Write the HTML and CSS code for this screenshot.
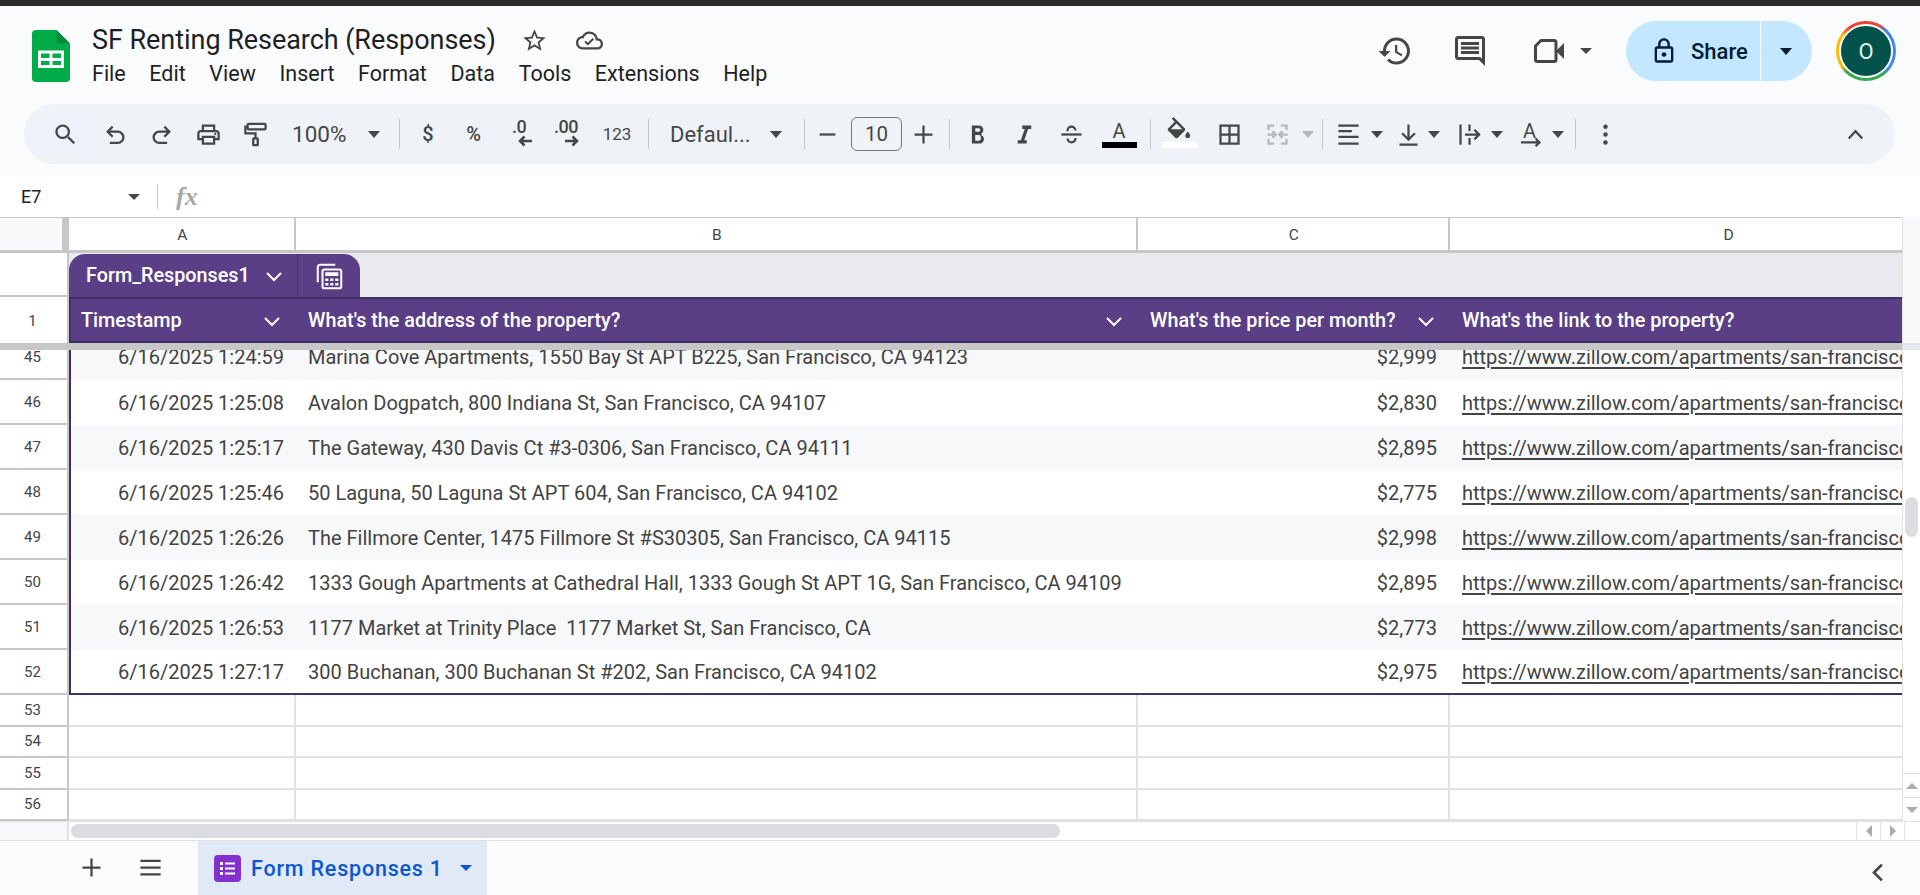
FILE: index.html
```html
<!DOCTYPE html>
<html lang="en">
<head>
<meta charset="utf-8">
<title>SF Renting Research (Responses)</title>
<link rel="stylesheet" href="styles.css">
</head>
<body>
<svg class="sprites" aria-hidden="true">
  <symbol id="i-chev" viewBox="0 0 24 24"><path d="M5 9l7 7 7-7" fill="none" stroke="currentColor" stroke-width="2"/></symbol>
  <symbol id="i-search" viewBox="0 0 24 24"><path d="M15.5 14h-.79l-.28-.27C15.41 12.59 16 11.11 16 9.5 16 5.91 13.09 3 9.5 3S3 5.91 3 9.5 5.91 16 9.5 16c1.61 0 3.09-.59 4.23-1.57l.27.28v.79l5 4.99L20.49 19l-4.99-5zm-6 0C7.01 14 5 11.99 5 9.5S7.01 5 9.5 5 14 7.01 14 9.5 11.99 14 9.5 14z"/></symbol>
  <symbol id="i-undo" viewBox="0 0 24 24"><path d="M9.5 5 5 9.5 9.5 14M5.5 9.5H14a5 5 0 0 1 0 10H7" fill="none" stroke="currentColor" stroke-width="2"/></symbol>
  <symbol id="i-redo" viewBox="0 0 24 24"><path d="M14.5 5 19 9.5 14.5 14M18.500 9.500H10a5 5 0 0 0 0 10h7" fill="none" stroke="currentColor" stroke-width="2"/></symbol>
  <symbol id="i-print" viewBox="0 0 24 24"><path d="M19 8h-1V3H6v5H5c-1.660 0-3 1.340-3 3v6h4v4h12v-4h4v-6c0-1.660-1.340-3-3-3zM8 5h8v3H8V5zm8 12v2H8v-4h8v2zm2-2v-2H6v2H4v-4c0-.55.45-1 1-1h14c.55 0 1 .45 1 1v4h-2z"/><circle cx="18" cy="11.500" r="1"/></symbol>
  <symbol id="i-paint" viewBox="0 0 24 24"><path d="M6 2.500h14a1 1 0 0 1 1 1v3a1 1 0 0 1-1 1H6a1 1 0 0 1-1-1v-3a1 1 0 0 1 1-1zM5 5H3v6h9v4M10.500 15.500h3a.5.5 0 0 1 .5.5v5a.5.5 0 0 1-.5.500h-3a.5.5 0 0 1-.5-.500v-5a.5.5 0 0 1 .5-.500z" fill="none" stroke="currentColor" stroke-width="2"/></symbol>
  <symbol id="i-left" viewBox="0 0 16 12"><path d="M15 6H3M7.500 1.500 3 6l4.500 4.500" fill="none" stroke="currentColor" stroke-width="2.500"/></symbol>
  <symbol id="i-right" viewBox="0 0 16 12"><path d="M1 6h12M8.500 1.500 13 6l-4.500 4.500" fill="none" stroke="currentColor" stroke-width="2.500"/></symbol>
  <symbol id="i-minus" viewBox="0 0 24 24"><path d="M5 11h14v2H5z"/></symbol>
  <symbol id="i-plus" viewBox="0 0 24 24"><path d="M11 4h2v7h7v2h-7v7h-2v-7H4v-2h7z"/></symbol>
  <symbol id="i-bold" viewBox="0 0 24 24"><path d="M15.600 10.790c.97-.67 1.650-1.770 1.650-2.790 0-2.260-1.750-4-4-4H7v16h7.040c2.090 0 3.710-1.700 3.710-4.290 0-1.520-.86-2.320-2.150-2.920zM10 6.500h3c.83 0 1.500.67 1.500 1.500s-.67 1.500-1.500 1.500h-3v-3zm3.500 11H10v-5h3.500c.83 0 1.500 1.170 1.500 2.500s-.67 2.500-1.500 2.500z"/></symbol>
  <symbol id="i-italic" viewBox="0 0 24 24"><path d="M10 4v3h2.210l-3.420 10H6v3h8v-3h-2.210l3.420-10H18V4z"/></symbol>
  <symbol id="i-strike" viewBox="0 0 24 24"><path d="M3 11h18v2H3z"/><path d="M8.500 9V8.500a3.500 3.500 0 0 1 7 0M8.500 15.500a3.500 3.500 0 0 0 7 0V15" fill="none" stroke="currentColor" stroke-width="2"/></symbol>
  <symbol id="i-fill" viewBox="0 0 24 24"><path d="M7.620 0 6.210 1.410l2.380 2.380-5.150 5.150c-.59.59-.59 1.540 0 2.120l5.500 5.500c.29.29.68.44 1.060.44s.77-.15 1.060-.44l5.500-5.500c.59-.58.59-1.530 0-2.120zM5.210 10 10 5.210 14.790 10z"/><path d="M4 10h12l-6 6zM19 11.500s-2 2.170-2 3.500c0 1.100.9 2 2 2s2-.9 2-2c0-1.330-2-3.500-2-3.500z"/></symbol>
  <symbol id="i-borders" viewBox="0 0 24 24"><path d="M3 3v18h18V3zm8 16H5v-6h6zm0-8H5V5h6zm8 8h-6v-6h6zm0-8h-6V5h6z"/></symbol>
  <symbol id="i-merge" viewBox="0 0 24 24"><path d="M4 8V4h5M15 4h5v4M4 16v4h5M15 20h5v-4M3 12h7M7.500 9 10.500 12l-3 3M21 12h-7M16.500 9l-3 3 3 3" fill="none" stroke="currentColor" stroke-width="2"/></symbol>
  <symbol id="i-align" viewBox="0 0 24 24"><path d="M3 3h18v2H3zM3 8h12v2H3zM3 13h18v2H3zM3 19h18v2H3z"/></symbol>
  <symbol id="i-valign" viewBox="0 0 24 24"><path d="M11 3h2v11.200l4-4 1.400 1.400L12 18l-6.400-6.400L7 10.200l4 4zM4 20h16v2H4z"/></symbol>
  <symbol id="i-wrap" viewBox="0 0 24 24"><path d="M3 3h2v18H3zM11 3h2v6h-2zM11 15h2v6h-2zM8 11h10.200l-2.600-2.600L17 7l5 5-5 5-1.400-1.400 2.600-2.600H8z"/></symbol>
  <symbol id="i-rot" viewBox="0 0 24 24"><path d="M3.500 19H20M16.500 15.500 20 19l-3.500 3.500" fill="none" stroke="currentColor" stroke-width="2"/></symbol>
  <symbol id="i-dots" viewBox="0 0 24 24"><circle cx="12" cy="5" r="2"/><circle cx="12" cy="12" r="2"/><circle cx="12" cy="19" r="2"/></symbol>
  <symbol id="i-up" viewBox="0 0 24 24"><path d="M6 15.500 12 9l6 6.500" fill="none" stroke="currentColor" stroke-width="2"/></symbol>
</svg>

<div class="topstrip"></div>

<header class="appbar">
  <svg class="logo" viewBox="0 0 38 52"><path d="M4 0h20.500L38 13.500V48a4 4 0 0 1-4 4H4a4 4 0 0 1-4-4V4a4 4 0 0 1 4-4z" fill="#00ac47"/><path d="M24.500 0 38 13.500H24.500z" fill="#0a8a3c"/><path d="M6 20.500h26V38H6z" fill="#fff"/><path d="M9 23.500h8.500V28H9zM20.500 23.500H29V28h-8.500zM9 31h8.500v4H9zM20.500 31H29v4h-8.500z" fill="#00ac47"/></svg>
  <div class="docinfo">
    <div class="titlerow">
      <span class="title">SF Renting Research (Responses)</span>
      <svg class="star" viewBox="0 0 24 24"><path d="M22 9.240l-7.190-.62L12 2 9.190 8.630 2 9.240l5.460 4.730L5.820 21 12 17.270 18.180 21l-1.630-7.030L22 9.240zM12 15.400l-3.760 2.270 1-4.280-3.320-2.880 4.380-.38L12 6.100l1.710 4.040 4.380.38-3.320 2.880 1 4.280L12 15.400z"/></svg>
      <svg class="cloud" viewBox="0 0 24 24"><path d="M19.350 10.040C18.670 6.590 15.640 4 12 4 9.110 4 6.600 5.640 5.350 8.040 2.340 8.360 0 10.910 0 14c0 3.310 2.690 6 6 6h13c2.760 0 5-2.240 5-5 0-2.640-2.050-4.780-4.650-4.960zM19 18H6c-2.210 0-4-1.790-4-4s1.790-4 4-4h.71C7.370 7.690 9.480 6 12 6c3.040 0 5.500 2.460 5.500 5.500v.5H19c1.660 0 3 1.340 3 3s-1.340 3-3 3z"/><path d="M10.500 16.500 7.500 13.500l1.200-1.200 1.800 1.800 4.300-4.300 1.200 1.200z"/></svg>
    </div>
    <nav class="menubar">
      <span>File</span><span>Edit</span><span>View</span><span>Insert</span><span>Format</span><span>Data</span><span>Tools</span><span>Extensions</span><span>Help</span>
    </nav>
  </div>
  <div class="actions">
    <svg class="act history" viewBox="0 0 24 24"><path d="M13 3c-4.970 0-9 4.030-9 9H1l3.890 3.890.07.14L9 12H6c0-3.870 3.130-7 7-7s7 3.130 7 7-3.130 7-7 7c-1.930 0-3.680-.79-4.940-2.060l-1.420 1.420C8.270 19.990 10.510 21 13 21c4.970 0 9-4.030 9-9s-4.030-9-9-9zm-1 5v5l4.280 2.540.72-1.210-3.500-2.080V8H12z"/></svg>
    <svg class="act comment" viewBox="0 0 24 24"><path d="M21.990 4c0-1.100-.89-2-1.990-2H4c-1.100 0-2 .9-2 2v12c0 1.100.9 2 2 2h14l4 4-.01-18zM20 4v13.170L18.830 16H4V4h16zM6 12h12v2H6zm0-3h12v2H6zm0-3h12v2H6z"/></svg>
    <svg class="video" viewBox="0 0 30 24"><path d="M7 1.500h13a2 2 0 0 1 2 2v17a2 2 0 0 1-2 2H3.500a2 2 0 0 1-2-2V7z" fill="none" stroke="currentColor" stroke-width="3"/><path d="M22 12 30 4v16z"/></svg>
    <span class="caret videocaret"></span>
    <div class="share">
      <div class="share-main">
        <svg class="lock" viewBox="0 0 24 24"><path d="M18 8h-1V6c0-2.760-2.240-5-5-5S7 3.240 7 6v2H6c-1.100 0-2 .9-2 2v10c0 1.100.9 2 2 2h12c1.100 0 2-.9 2-2V10c0-1.100-.9-2-2-2zM9 6c0-1.660 1.340-3 3-3s3 1.340 3 3v2H9V6zm9 14H6V10h12v10z"/><circle cx="12" cy="15" r="2"/></svg>
        <span>Share</span>
      </div>
      <div class="share-more"><span class="caret sharecaret"></span></div>
    </div>
    <div class="avatar-ring"><div class="avatar">O</div></div>
  </div>
</header>

<div class="toolbar">
  <div class="tb search"><svg class="ic"><use href="#i-search"/></svg></div>
  <div class="tb w45"><svg class="ic"><use href="#i-undo"/></svg></div>
  <div class="tb w47"><svg class="ic"><use href="#i-redo"/></svg></div>
  <div class="tb w47"><svg class="ic"><use href="#i-print"/></svg></div>
  <div class="tb w46"><svg class="ic"><use href="#i-paint"/></svg></div>
  <div class="tb zoomsel"><span>100%</span><span class="caret"></span></div>
  <div class="sep sep-wide"></div>
  <div class="tb w44 tx">$</div>
  <div class="tb w47 tx">%</div>
  <div class="tb w44 dec"><span>.0</span><svg class="arrow arrow-l"><use href="#i-left"/></svg></div>
  <div class="tb w50 dec"><span>.00</span><svg class="arrow arrow-r"><use href="#i-right"/></svg></div>
  <div class="tb w52 tx small">123</div>
  <div class="sep"></div>
  <div class="tb fontsel"><span>Defaul...</span><span class="caret"></span></div>
  <div class="sep"></div>
  <div class="tb w44"><svg class="ic"><use href="#i-minus"/></svg></div>
  <div class="sizebox">10</div>
  <div class="tb w42"><svg class="ic"><use href="#i-plus"/></svg></div>
  <div class="sep"></div>
  <div class="tb w54"><svg class="ic"><use href="#i-bold"/></svg></div>
  <div class="tb w40"><svg class="ic"><use href="#i-italic"/></svg></div>
  <div class="tb w54"><svg class="ic"><use href="#i-strike"/></svg></div>
  <div class="tb w42 colorbtn"><span class="colorA">A</span><span class="swatch black"></span></div>
  <div class="sep sep-10"></div>
  <div class="tb w56 colorbtn fillbtn"><svg class="fillic"><use href="#i-fill"/></svg><span class="swatch white"></span></div>
  <div class="tb w44"><svg class="ic"><use href="#i-borders"/></svg></div>
  <div class="tb combo merge"><svg class="ic"><use href="#i-merge"/></svg><span class="caret"></span></div>
  <div class="sep"></div>
  <div class="tb combo align"><svg class="ic"><use href="#i-align"/></svg><span class="caret"></span></div>
  <div class="tb combo valign"><svg class="ic"><use href="#i-valign"/></svg><span class="caret"></span></div>
  <div class="tb combo wrap"><svg class="ic"><use href="#i-wrap"/></svg><span class="caret"></span></div>
  <div class="tb combo rot"><span class="rotbox"><span class="rotA">A</span><svg class="ic rotic"><use href="#i-rot"/></svg></span><span class="caret"></span></div>
  <div class="sep sep-5"></div>
  <div class="tb w58"><svg class="ic"><use href="#i-dots"/></svg></div>
  <div class="tb collapse"><svg class="ic"><use href="#i-up"/></svg></div>
</div>

<div class="formulabar">
  <span class="namebox">E7</span>
  <span class="caret namecaret"></span>
  <span class="fsep"></span>
  <span class="fx">fx</span>
</div>

<div class="gridwrap">
  <div class="cells">
    <div class="row colheads">
      <div class="corner"></div>
      <div class="colh">A</div><div class="colh">B</div><div class="colh">C</div><div class="colh last">D</div>
    </div>
    <div class="row chiprow">
      <div class="rh"></div>
      <div class="band">
        <div class="chip">
          <div class="chip-name"><span>Form_Responses1</span><svg class="chev"><use href="#i-chev"/></svg></div>
          <div class="chip-calc">
            <svg class="calc" viewBox="0 0 24 24"><path d="M3 17V5a2 2 0 0 1 2-2h12" fill="none" stroke="#fff" stroke-width="1.600"/><rect x="6.800" y="6.800" width="15" height="15" rx="1.500" fill="none" stroke="#fff" stroke-width="1.600"/><path d="M9 9h10.500v3H9zM9 14h2.500v2H9zM13 14h2.500v2H13zM17 14h2.500v2H17zM9 17.500h2.500v2H9zM13 17.500h2.500v2H13zM17 17.500h2.500v2H17z" fill="#fff"/></svg>
          </div>
        </div>
      </div>
    </div>
    <div class="row headrow">
      <div class="rh num">1</div>
      <div class="hc"><span>Timestamp</span><svg class="chev"><use href="#i-chev"/></svg></div>
      <div class="hc"><span>What's the address of the property?</span><svg class="chev"><use href="#i-chev"/></svg></div>
      <div class="hc"><span>What's the price per month?</span><svg class="chev"><use href="#i-chev"/></svg></div>
      <div class="hc"><span>What's the link to the property?</span></div>
    </div>
    <div class="freeze"></div>

    <div class="row data clipped odd">
      <div class="rh num">45</div><div class="c first r">6/16/2025 1:24:59</div><div class="c">Marina Cove Apartments, 1550 Bay St APT B225, San Francisco, CA 94123</div><div class="c r">$2,999</div><div class="c"><a href="#">https://www.zillow.com/apartments/san-francisco-ca/marina-cove-apartments/</a></div>
    </div>
    <div class="row data">
      <div class="rh num">46</div><div class="c first r">6/16/2025 1:25:08</div><div class="c">Avalon Dogpatch, 800 Indiana St, San Francisco, CA 94107</div><div class="c r">$2,830</div><div class="c"><a href="#">https://www.zillow.com/apartments/san-francisco-ca/avalon-dogpatch/</a></div>
    </div>
    <div class="row data odd">
      <div class="rh num">47</div><div class="c first r">6/16/2025 1:25:17</div><div class="c">The Gateway, 430 Davis Ct #3-0306, San Francisco, CA 94111</div><div class="c r">$2,895</div><div class="c"><a href="#">https://www.zillow.com/apartments/san-francisco-ca/the-gateway/</a></div>
    </div>
    <div class="row data">
      <div class="rh num">48</div><div class="c first r">6/16/2025 1:25:46</div><div class="c">50 Laguna, 50 Laguna St APT 604, San Francisco, CA 94102</div><div class="c r">$2,775</div><div class="c"><a href="#">https://www.zillow.com/apartments/san-francisco-ca/50-laguna/</a></div>
    </div>
    <div class="row data odd">
      <div class="rh num">49</div><div class="c first r">6/16/2025 1:26:26</div><div class="c">The Fillmore Center, 1475 Fillmore St #S30305, San Francisco, CA 94115</div><div class="c r">$2,998</div><div class="c"><a href="#">https://www.zillow.com/apartments/san-francisco-ca/the-fillmore-center/</a></div>
    </div>
    <div class="row data">
      <div class="rh num">50</div><div class="c first r">6/16/2025 1:26:42</div><div class="c">1333 Gough Apartments at Cathedral Hall, 1333 Gough St APT 1G, San Francisco, CA 94109</div><div class="c r">$2,895</div><div class="c"><a href="#">https://www.zillow.com/apartments/san-francisco-ca/1333-gough/</a></div>
    </div>
    <div class="row data odd">
      <div class="rh num">51</div><div class="c first r">6/16/2025 1:26:53</div><div class="c">1177 Market at Trinity Place&nbsp; 1177 Market St, San Francisco, CA</div><div class="c r">$2,773</div><div class="c"><a href="#">https://www.zillow.com/apartments/san-francisco-ca/1177-market/</a></div>
    </div>
    <div class="row data lastdata">
      <div class="rh num">52</div><div class="c first r">6/16/2025 1:27:17</div><div class="c">300 Buchanan, 300 Buchanan St #202, San Francisco, CA 94102</div><div class="c r">$2,975</div><div class="c"><a href="#">https://www.zillow.com/apartments/san-francisco-ca/300-buchanan/</a></div>
    </div>

    <div class="row empty"><div class="rh num">53</div><div class="e"></div><div class="e"></div><div class="e"></div><div class="e"></div></div>
    <div class="row empty"><div class="rh num">54</div><div class="e"></div><div class="e"></div><div class="e"></div><div class="e"></div></div>
    <div class="row empty"><div class="rh num">55</div><div class="e"></div><div class="e"></div><div class="e"></div><div class="e"></div></div>
    <div class="row empty"><div class="rh num">56</div><div class="e"></div><div class="e"></div><div class="e"></div><div class="e"></div></div>
  </div>
  <div class="vscroll">
    <div class="vs-head"></div>
    <div class="vs-strip"></div>
    <div class="vs-thumb"></div>
    <div class="vs-btn"><span class="tri tri-up"></span></div>
    <div class="vs-btn"><span class="tri tri-down"></span></div>
  </div>
</div>

<div class="hscroll">
  <div class="hs-left"></div>
  <div class="hs-track"><div class="hs-thumb"></div></div>
  <div class="hs-btn"><span class="tri tri-left"></span></div>
  <div class="hs-btn"><span class="tri tri-right"></span></div>
  <div class="hs-end"></div>
</div>

<footer class="tabs">
  <svg class="tabic add"><use href="#i-plus"/></svg>
  <svg class="tabic all" viewBox="0 0 24 24"><path d="M3 5h18v2H3zM3 11h18v2H3zM3 17h18v2H3z"/></svg>
  <div class="sheettab">
    <svg class="formicon" viewBox="0 0 27 27"><rect width="27" height="27" rx="4" fill="#8430ce"/><path d="M6 7h3v3H6zM11 7.500h10v2H11zM6 12h3v3H6zM11 12.500h10v2H11zM6 17h3v3H6zM11 17.500h10v2H11z" fill="#fff"/></svg>
    <span class="tabname">Form Responses 1</span>
    <span class="caret bluecaret"></span>
  </div>
  <svg class="explore" viewBox="0 0 24 24"><path d="M15 5l-7 7 7 7" fill="none" stroke="currentColor" stroke-width="2.400"/></svg>
</footer>
</body>
</html>
```
FILE: styles.css
```css
* { box-sizing: border-box; }
html, body { margin: 0; padding: 0; }
body {
  width: 1920px;
  height: 895px;
  overflow: hidden;
  background: #f9fbfd;
  font-family: Roboto, "Liberation Sans", sans-serif;
  color: #444746;
  display: flex;
  flex-direction: column;
}
svg { fill: currentColor; display: block; flex: none; }
.sprites { width: 0; height: 0; position: absolute; }
.topstrip { height: 6px; background: #2d2d2d; flex: none; }

/* caret */
.caret {
  display: block;
  flex: none;
  width: 0;
  height: 0;
  border-left: 6.5px solid transparent;
  border-right: 6.5px solid transparent;
  border-top: 7px solid #444746;
}

/* app bar */
.appbar {
  height: 98px;
  flex: none;
  display: flex;
  padding: 16px 0 0 32px;
}
.logo { width: 38px; height: 52px; margin-top: 8px; }
.docinfo { margin-left: 22px; }
.titlerow { display: flex; align-items: center; height: 36px; }
.title { font-size: 27px; color: #1f1f1f; letter-spacing: -.05px; white-space: nowrap; }
.star { width: 27px; height: 27px; margin-left: 25px; color: #444746; }
.cloud { width: 27px; height: 27px; margin-left: 28px; color: #444746; }
.menubar { display: flex; gap: 23.600px; font-size: 21.500px; color: #1f1f1f; height: 28px; line-height: 28px; margin-top: 2px; }

.actions { margin-left: auto; display: flex; align-items: center; height: 60px; margin-top: -1px; padding-right: 24px; }
.act { width: 36px; height: 36px; }
.history { margin-right: 39px; margin-left: 1px; }
.comment { margin-right: 46px; }
.video { width: 30px; height: 24px; }
.videocaret { margin-left: 16px; margin-right: 34px; border-top-width: 6px; }
.share {
  width: 186px;
  height: 60px;
  border-radius: 30px;
  background: #c2e7ff;
  color: #001d35;
  display: flex;
}
.share-main {
  width: 135px;
  display: flex;
  align-items: center;
  padding-left: 24px;
  gap: 13px;
  font-size: 22px;
  font-weight: 500;
  border-right: 1px solid #fff;
}
.lock { width: 28px; height: 28px; }
.share-more { flex: 1; display: flex; align-items: center; justify-content: center; }
.sharecaret { border-top-color: #001d35; margin-left: -1px; }
.avatar-ring {
  width: 60px;
  height: 60px;
  margin-left: 24px;
  border-radius: 50%;
  padding: 3px;
  background: conic-gradient(#ea4335 0 8%, #4285f4 12% 36%, #34a853 40% 62%, #fbbc04 66% 84%, #ea4335 90%);
}
.avatar {
  width: 100%;
  height: 100%;
  border-radius: 50%;
  border: 2px solid #fff;
  background: #00524a;
  color: #e8f0ee;
  font-size: 22px;
  display: flex;
  align-items: center;
  justify-content: center;
}

/* toolbar */
.toolbar {
  margin-left: 24px;
  width: 1871px;
  height: 60px;
  flex: none;
  border-radius: 30px;
  background: #eff3f8;
  display: flex;
  align-items: center;
  padding-left: 14px;
  font-size: 20px;
}
.tb { height: 40px; display: flex; align-items: center; justify-content: center; flex: none; }
.ic { width: 27px; height: 27px; }
.search { width: 55px; background: #ecf1fa; border-radius: 6px; }
.w40 { width: 40px; } .w42 { width: 42px; } .w44 { width: 44px; } .w45 { width: 45px; }
.w46 { width: 46px; } .w47 { width: 47px; } .w50 { width: 50px; } .w52 { width: 52px; }
.w54 { width: 54px; } .w56 { width: 56px; } .w58 { width: 58px; }
.sep { width: 1px; height: 30px; background: #c7c7c7; margin-left: 5px; flex: none; }
.sep-wide { margin: 0 6px; }
.sep-10 { margin-left: 10px; }
.sep-5 { margin-left: 5px; }
.zoomsel { width: 115px; justify-content: space-between; padding: 0 13px 0 14px; font-size: 22.500px; }
.tx { font-size: 20px; font-weight: 500; }
.small { font-size: 17px; font-weight: 400; }
.dec { flex-direction: column; font-size: 18px; font-weight: 500; line-height: 17px; }
.dec span { margin-top: -3px; letter-spacing: -.5px; }
.arrow { width: 16px; height: 12px; }
.arrow-l { margin-left: 12px; }
.arrow-r { margin-left: 12px; }
.fontsel { width: 150px; justify-content: space-between; padding: 0 17px 0 21px; font-size: 22px; }
.sizebox {
  width: 51px;
  height: 34px;
  margin-left: 2px;
  border: 1px solid #747775;
  border-radius: 6px;
  display: flex;
  align-items: center;
  justify-content: center;
  font-size: 20.500px;
  flex: none;
}
.colorbtn { flex-direction: column; justify-content: flex-start; padding-top: 5px; }
.colorA { font-size: 20px; line-height: 24px; height: 24px; color: #444746; }
.swatch { width: 35px; height: 6px; display: block; margin-top: -1px; flex: none; }
.black { background: #000; }
.white { background: #fff; margin-top: 0; }
.fillbtn { padding-top: 3px; }
.fillic { width: 30px; height: 30px; margin-bottom: -5px; }
.combo { justify-content: flex-start; }
.merge { width: 66px; padding-left: 12.500px; gap: 11.500px; color: #b6b8ba; }
.merge .caret { border-top-color: #b6b8ba; }
.align { width: 65px; padding-left: 11.500px; gap: 9.500px; }
.valign { width: 61px; padding-left: 6.500px; gap: 6.500px; }
.wrap { width: 61px; padding-left: 6.500px; gap: 8.500px; }
.rot { width: 60px; padding-left: 6.500px; gap: 8.500px; }
.rotbox { position: relative; width: 27px; height: 27px; display: block; flex: none; }
.rotA { position: absolute; left: 6.500px; top: -2px; font-size: 20px; line-height: 24px; }
.rotic { position: absolute; left: 0; top: 0; }
.collapse { margin-left: auto; width: 40px; margin-right: 20px; }

/* formula bar */
.formulabar {
  margin-top: 12px;
  height: 41px;
  flex: none;
  background: #fff;
  display: flex;
  align-items: center;
  padding-left: 21px;
}
.namebox { width: 107px; font-size: 18px; color: #1f1f1f; }
.namecaret { border-top-width: 6px; }
.fsep { width: 1px; height: 25px; background: #c7c7c7; margin-left: 17px; }
.fx { margin-left: 18px; font: italic bold 26px "Liberation Serif", serif; color: #a5a7a9; }

/* grid */
.gridwrap { display: flex; height: 604px; flex: none; background: #fff; }
.cells { width: 1902px; flex: none; }
.row { display: grid; grid-template-columns: 69px 227px 842px 312px 452px; }
.rh {
  background: #fff;
  border-right: 2px solid #c7c7c7;
  border-bottom: 2px solid #c7c7c7;
}
.num { display: flex; align-items: center; justify-content: center; font-size: 15px; color: #444; padding-right: 2px; }
.colheads { height: 36px; border-top: 1.500px solid #c7c7c7; border-bottom: 3px solid #c7c7c7; }
.corner { background: #f8f9fa; border-right: 7px solid #c7c7c7; }
.colh {
  background: #fff;
  border-right: 2px solid #c7c7c7;
  display: flex;
  align-items: center;
  justify-content: center;
  font-size: 15.500px;
  color: #444;
  padding: 1px 0 0 1.500px;
}
.colh.last { border-right: 0; padding-left: 105px; }
.chiprow { height: 44px; }
.band { grid-column: 2 / 6; background: #e8eaed; padding-top: 1px; }
.chip {
  width: 291px;
  height: 43px;
  background: #5b3f86;
  border-radius: 16px 16px 0 0;
  color: #fff;
  display: flex;
}
.chip-name {
  width: 229px;
  padding-left: 17px;
  display: flex;
  align-items: center;
  justify-content: space-between;
  padding-right: 11px;
  border-right: 1px solid #4a3270;
  font-size: 19.800px;
  font-weight: 500;
}
.chip-calc { flex: 1; display: flex; align-items: center; justify-content: center; }
.calc { width: 30px; height: 30px; }
.chev { width: 24px; height: 24px; color: #fff; flex: none; }
.headrow { height: 46px; }
.headrow .rh { border-bottom: 0; font-size: 15px; padding-top: 1px; }
.hc {
  background: #5b3f86;
  border-top: 2px solid #432e66;
  border-bottom: 2px solid #432e66;
  color: #fff;
  font-size: 19.800px;
  font-weight: 500;
  display: flex;
  align-items: center;
  justify-content: space-between;
  padding: 1px 12px 0 12px;
  white-space: nowrap;
  overflow: hidden;
}
.headrow .hc:nth-child(2) { border-left: 2px solid #432e66; padding-left: 10px; }
.freeze { height: 7px; background: #c7c7c7; }

.data { height: 45px; }
.data.clipped { height: 30px; }
.c {
  font-size: 20px;
  color: #434343;
  padding: 0 13px 0 12px;
  white-space: nowrap;
  overflow: hidden;
  display: flex;
  align-items: center;
  background: #fff;
}
.c.r { justify-content: flex-end; }
.c.first { border-left: 2px solid #432e66; padding-right: 12px; }
.odd .c { background: #f7f8fa; }
.clipped .c { align-items: flex-start; line-height: 14px; padding-top: 0; }
.clipped .rh { align-items: flex-start; line-height: 14px; }
.c a { color: #434343; text-decoration: underline; text-decoration-thickness: 2px; text-underline-offset: 3px; }
.lastdata .c { border-bottom: 2px solid #432e66; }
.empty { height: 31.500px; }
.e { border-right: 2px solid #e1e1e1; border-bottom: 2px solid #e1e1e1; }
.e:last-child { border-right: 0; }

/* scrollbars */
.vscroll { width: 18px; flex: none; border-left: 1px solid #e1e3e1; display: flex; flex-direction: column; background: #fff; }
.vs-head { height: 126px; background: #f8f9fa; flex: none; }
.vs-strip { height: 7px; background: #e4e7ec; flex: none; }
.vs-thumb { width: 13px; height: 40px; margin: 147px 0 0 2px; background: #dadce0; border-radius: 7px; flex: none; }
.vs-btn {
  height: 24px;
  flex: none;
  display: flex;
  align-items: center;
  justify-content: center;
  border-top: 1px solid #e1e3e1;
}
.vs-thumb + .vs-btn { margin-top: auto; }
.tri { display: block; width: 0; height: 0; }
.tri-up { border: 6px solid transparent; border-top: 0; border-bottom: 6px solid #a9abad; }
.tri-down { border: 6px solid transparent; border-bottom: 0; border-top: 6px solid #a9abad; }
.tri-left { border: 6px solid transparent; border-left: 0; border-right: 6px solid #a9abad; }
.tri-right { border: 6px solid transparent; border-right: 0; border-left: 6px solid #a9abad; }

.hscroll { height: 19px; flex: none; display: flex; background: #fff; border-top: 1px solid #e1e3e1; }
.hs-left { width: 69px; background: #f8f9fa; border-right: 2px solid #e1e3e1; flex: none; }
.hs-track { width: 1787px; flex: none; padding: 2px 0 0 2px; }
.hs-thumb { width: 989px; height: 14px; border-radius: 7px; background: #dadce0; }
.hs-btn { width: 24px; flex: none; border-left: 1px solid #e1e3e1; display: flex; align-items: center; justify-content: center; }
.hs-end { flex: 1; border-left: 1px solid #e1e3e1; }

/* sheet tabs */
.tabs {
  flex: 1;
  border-top: 1px solid #e1e3e1;
  display: flex;
  align-items: flex-start;
  background: #f9fbfd;
}
.tabic { width: 27px; height: 27px; margin-top: 13px; }
.add { margin-left: 78px; }
.all { margin-left: 32px; }
.sheettab {
  margin-left: 34px;
  width: 289px;
  height: 54px;
  background: #e1e9f7;
  display: flex;
  align-items: center;
  padding-left: 16px;
}
.formicon { width: 27px; height: 27px; }
.tabname { margin-left: 10px; font-size: 21.500px; font-weight: 500; color: #0b57d0; letter-spacing: .8px; white-space: nowrap; }
.bluecaret { margin-left: 17px; border-top-color: #0b57d0; border-top-width: 6px; }
.explore { width: 27px; height: 27px; margin: 18px 28px 0 auto; color: #444746; }
```
